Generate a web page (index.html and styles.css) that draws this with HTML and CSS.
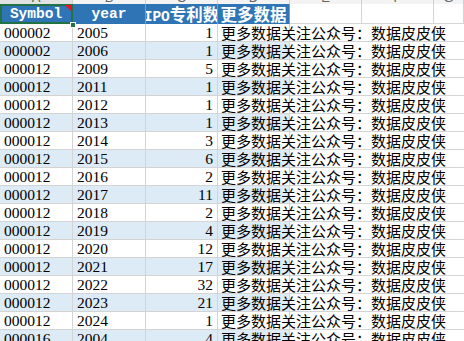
FILE: index.html
```html
<!DOCTYPE html>
<html>
<head>
<meta charset="utf-8">
<link rel="stylesheet" href="styles.css">
</head>
<body>
<div class="sheet">
  <div class="colhdr">
    <div class="ch cw-a sel"><span>A</span></div>
    <div class="ch cw-b"><span>B</span></div>
    <div class="ch cw-c"><span>C</span></div>
    <div class="ch cw-d"><span>D</span></div>
    <div class="ch cw-e"><span>E</span></div>
    <div class="ch cw-f"><span>F</span></div>
    <div class="ch cw-g"><span>G</span></div>
  </div>
  <div class="hrow">
    <div class="hc cw-a active"><span class="lat">Symbol</span><i class="note"></i><i class="handle"></i></div>
    <div class="hc cw-b"><span class="lat">year</span></div>
    <div class="hc cw-c"><span class="clip"><span class="lat">IPO</span>专利数</span></div>
    <div class="hc cw-d">更多数据</div>
    <div class="ec cw-e"></div>
    <div class="ec cw-f"></div>
    <div class="ec cw-g"></div>
  </div>
  <div id="rows"></div>
</div>
<script src="app.js"></script>
</body>
</html>
```

FILE: app.js
```js
const data = [
  ["000002","2005",1],["000002","2006",1],["000012","2009",5],["000012","2011",1],
  ["000012","2012",1],["000012","2013",1],["000012","2014",3],["000012","2015",6],
  ["000012","2016",2],["000012","2017",11],["000012","2018",2],["000012","2019",4],
  ["000012","2020",12],["000012","2021",17],["000012","2022",32],["000012","2023",21],
  ["000012","2024",1],["000016","2004",4]
];
const rows = document.getElementById("rows");
data.forEach((d, i) => {
  const r = document.createElement("div");
  r.className = "row" + (i % 2 ? " alt" : "");
  r.innerHTML =
    '<div class="dc cw-a num">' + d[0] + '</div>' +
    '<div class="dc cw-b num">' + d[1] + '</div>' +
    '<div class="dc cw-c num right">' + d[2] + '</div>' +
    '<div class="dc cw-d txt">更多数据关注公众号：数据皮皮侠</div>' +
    '<div class="oc cw-e"></div><div class="oc cw-f"></div><div class="oc cw-g"></div>';
  rows.appendChild(r);
});
```

FILE: styles.css
```css
* { box-sizing: border-box; }
html, body {
  margin: 0;
  padding: 0;
  background: #ffffff;
  overflow: hidden;
}
.sheet {
  width: 464px;
  height: 341px;
  overflow: hidden;
  font-family: "Noto Sans CJK SC", sans-serif;
  color: #000;
}
.cw-a { width: 73px; }
.cw-b { width: 73px; }
.cw-c { width: 72px; }
.cw-d { width: 72px; }
.cw-e { width: 72px; }
.cw-f { width: 72px; }
.cw-g { width: 30px; }

.colhdr {
  display: flex;
  height: 4px;
  overflow: hidden;
  background: #f3f3f3;
}
.ch {
  flex: none;
  height: 4px;
  overflow: hidden;
  border-right: 1px solid #d0d0d0;
  text-align: center;
  font-family: "Liberation Sans", sans-serif;
  font-size: 13px;
  color: #666;
}
.ch span {
  display: block;
  line-height: 14px;
  margin-top: -9px;
}
.ch.sel { background: #e2e2e2; color: #217346; }

.hrow {
  display: flex;
  height: 20px;
}
.hc {
  flex: none;
  position: relative;
  height: 20px;
  background: #2f75b5;
  color: #fff;
  font-weight: bold;
  font-size: 16.5px;
  line-height: 20px;
  text-align: center;
  white-space: nowrap;
  overflow: hidden;
  border-right: 1px solid #6f9fd0;
  display: flex;
  justify-content: center;
}
.hc .lat {
  font-family: "Liberation Mono", monospace;
  font-size: 14.5px;
  font-weight: bold;
}
.hc .clip { flex: none; }
.ec {
  flex: none;
  height: 20px;
  border-right: 1px solid #d4d4d4;
  border-bottom: 1px solid #d4d4d4;
}
.hc.active {
  overflow: visible;
  outline: 2px solid #217346;
  outline-offset: -2px;
  border-right-color: #217346;
  z-index: 2;
}
.note {
  position: absolute;
  right: 1px;
  top: 1px;
  width: 0;
  height: 0;
  border-top: 6px solid #e81123;
  border-left: 6px solid transparent;
}
.handle {
  position: absolute;
  right: -4px;
  bottom: -4px;
  width: 6px;
  height: 6px;
  background: #217346;
  border: 1px solid #fff;
}

.row {
  display: flex;
  height: 18px;
}
.dc {
  flex: none;
  height: 18px;
  border-right: 1px solid #d4d4d4;
  border-bottom: 1px solid #d4d4d4;
  background: #fff;
  line-height: 17px;
  white-space: nowrap;
  padding: 0 3px 0 4px;
}
.row.alt .dc { background: #ddebf7; }
.num {
  font-family: "Liberation Serif", serif;
  font-size: 15.5px;
  overflow: hidden;
}
.right { text-align: right; padding-right: 4px; }
.txt {
  font-size: 15px;
  padding-left: 3px;
  overflow: visible;
  position: relative;
  z-index: 1;
  background: transparent;
}
.row.alt .dc.txt { background: linear-gradient(#ddebf7, #ddebf7) no-repeat 0 0 / 71px 17px; }
.oc {
  flex: none;
  height: 18px;
  border-bottom: 1px solid #d4d4d4;
}
```
